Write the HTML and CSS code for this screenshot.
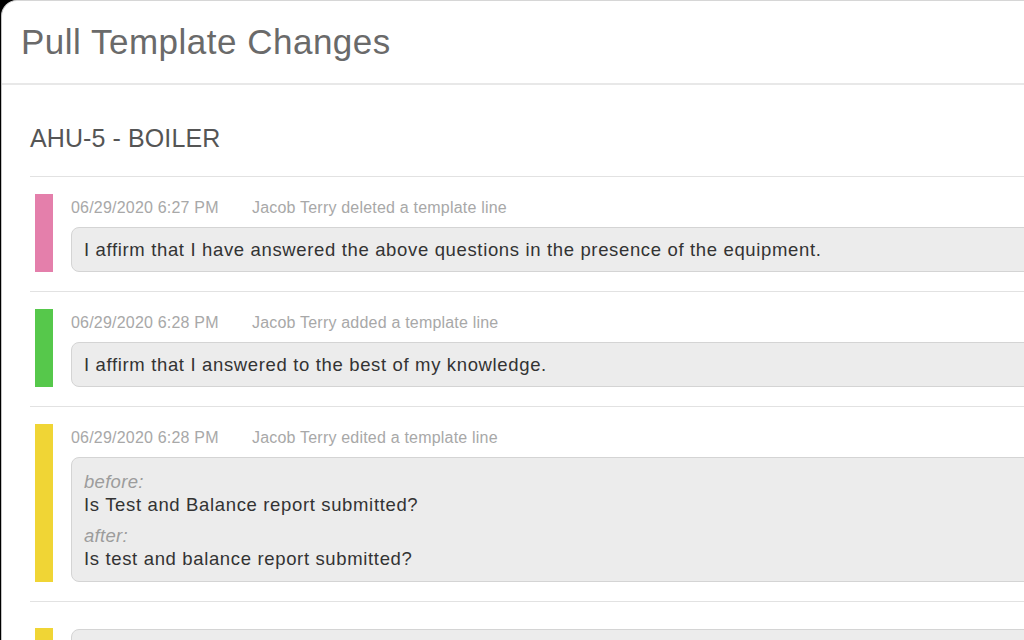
FILE: index.html
```html
<!DOCTYPE html>
<html>
<head>
<meta charset="utf-8">
<link rel="stylesheet" href="styles.css">
</head>
<body>
<div class="window">
  <div class="header">
    <h1 class="title">Pull Template Changes</h1>
  </div>
  <div class="content">
    <h2 class="group-title">AHU-5 - BOILER</h2>
    <div class="list">
      <div class="item">
        <div class="bar bar-deleted"></div>
        <div class="body">
          <div class="meta"><span class="date">06/29/2020 6:27 PM</span><span class="action">Jacob Terry deleted a template line</span></div>
          <div class="box"><div class="line">I affirm that I have answered the above questions in the presence of the equipment.</div></div>
        </div>
      </div>
      <div class="item">
        <div class="bar bar-added"></div>
        <div class="body">
          <div class="meta"><span class="date">06/29/2020 6:28 PM</span><span class="action">Jacob Terry added a template line</span></div>
          <div class="box"><div class="line">I affirm that I answered to the best of my knowledge.</div></div>
        </div>
      </div>
      <div class="item">
        <div class="bar bar-edited"></div>
        <div class="body">
          <div class="meta"><span class="date">06/29/2020 6:28 PM</span><span class="action">Jacob Terry edited a template line</span></div>
          <div class="box box-diff">
            <div class="diff">
              <div class="label">before:</div>
              <div class="line">Is Test and Balance report submitted?</div>
            </div>
            <div class="diff">
              <div class="label">after:</div>
              <div class="line">Is test and balance report submitted?</div>
            </div>
          </div>
        </div>
      </div>
      <div class="item item-partial">
        <div class="bar bar-edited"></div>
        <div class="body">
          <div class="box box-partial"><div class="line">&nbsp;</div></div>
        </div>
      </div>
    </div>
  </div>
</div>
</body>
</html>
```
FILE: styles.css
```css
html, body {
  margin: 0;
  padding: 0;
  height: 100%;
  overflow: hidden;
  background: #000;
}
body {
  font-family: "Liberation Sans", Arial, Helvetica, sans-serif;
}
.window {
  margin-left: 1px;
  width: 1100px;
  height: 700px;
  background: #fff;
  border-top: 1px solid #d6d6d6;
  border-left: 1px solid #c4c4c4;
  border-top-left-radius: 16px;
}
.header {
  padding: 23px 19px 23px;
  border-bottom: 2px solid #e8e8e8;
}
.title {
  margin: 0;
  font-size: 35px;
  line-height: 36px;
  font-weight: normal;
  letter-spacing: 0.5px;
  color: #6a6a6a;
}
.content {
  padding: 38px 0 0 28px;
}
.group-title {
  margin: 0 0 23px;
  font-size: 25px;
  line-height: 30px;
  font-weight: normal;
  letter-spacing: 0.1px;
  color: #555;
}
.item {
  display: flex;
  gap: 18px;
  padding: 17px 0 19px 5px;
  border-top: 1px solid #e2e2e2;
}
.item-partial {
  padding-top: 26px;
}
.bar {
  width: 18px;
  flex: none;
}
.bar-deleted { background: #e47fab; }
.bar-added { background: #56c84b; }
.bar-edited { background: #f0d535; }
.body {
  flex: 1;
  min-width: 0;
}
.meta {
  font-size: 16px;
  line-height: 28px;
  letter-spacing: 0.2px;
  color: #a8a8a8;
  margin-bottom: 5px;
  display: flex;
}
.date {
  width: 181px;
  flex: none;
}
.box {
  background: #ececec;
  border: 1px solid #d4d4d4;
  border-radius: 8px;
  padding: 10px 12px;
  display: flex;
  flex-direction: column;
  gap: 8px;
}
.box-diff {
  padding: 12px 12px 11px;
}
.box-partial {
  margin-top: 1px;
}
.line {
  font-size: 18.5px;
  line-height: 23px;
  letter-spacing: 0.65px;
  color: #333;
}
.label {
  font-size: 18.5px;
  line-height: 23px;
  letter-spacing: 0.3px;
  font-style: italic;
  color: #9c9c9c;
}
```
